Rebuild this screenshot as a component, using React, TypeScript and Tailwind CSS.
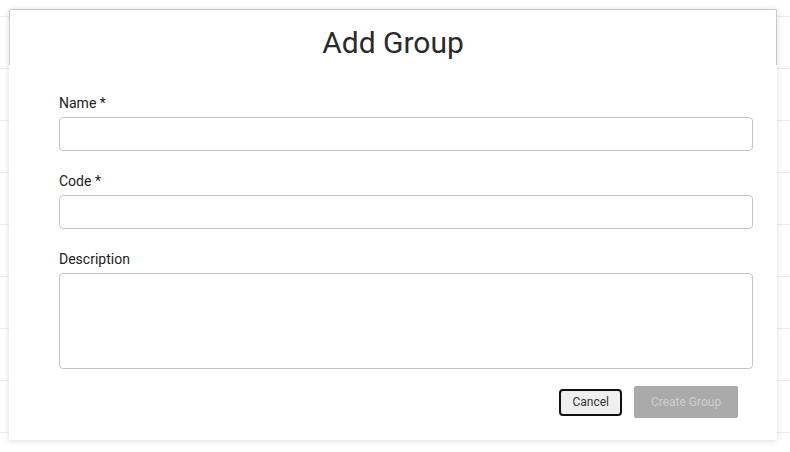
import React from 'react';

const rows = Array.from({ length: 8 });

function Field({ label, tall }: { label: string; tall?: boolean }) {
  return (
    <div className="flex flex-col">
      <label className="h-[18px] mb-[5px] text-[14px] leading-[18px] font-normal text-[#222]">{label}</label>
      {tall ? (
        <textarea className="h-[96px] w-full rounded-[4px] border border-[#c4c4c4] bg-white resize-none outline-none" />
      ) : (
        <input className="h-[34px] w-full rounded-[4px] border border-[#c4c4c4] bg-white outline-none" />
      )}
    </div>
  );
}

export default function App() {
  return (
    <div className="relative w-[790px] h-[452px] overflow-hidden bg-white" style={{ fontFamily: 'Roboto, "Liberation Sans", sans-serif' }}>
      {/* table rows behind the dialog */}
      <div className="flex flex-col">
        <div className="h-[17px] border-b border-[#ececec]" />
        {rows.map((_, i) => (
          <div key={i} className="h-[52px] border-b border-[#ececec]" />
        ))}
      </div>

      <div className="absolute left-[9px] top-[9px] w-[768px] bg-white shadow-[0_1px_6px_rgba(0,0,0,0.14)]">
        <div className="h-[56px] border border-b-0 border-[#c8c8c8] rounded-t-[2px] pt-[16px] text-center">
          <h2 className="text-[30px] leading-[34px] text-[#2a2a2a]">Add Group</h2>
        </div>
        <div className="pl-[50px] pr-[24px] pt-[29px] pb-[22px]">
          <div className="flex flex-col gap-[21px]">
            <Field label="Name *" />
            <Field label="Code *" />
            <Field label="Description" tall />
          </div>
          <div className="mt-[17px] pr-[15px] flex items-center justify-end gap-3">
            <button className="h-[27px] px-[11px] rounded-[4px] border-2 border-[#111] bg-[#efefef] text-[12px] text-[#333]">
              Cancel
            </button>
            <button disabled className="h-[32px] w-[104px] rounded-[2px] bg-[#aaaaaa] text-[12px] text-[#cdcdcd]">
              Create Group
            </button>
          </div>
        </div>
      </div>
    </div>
  );
}
